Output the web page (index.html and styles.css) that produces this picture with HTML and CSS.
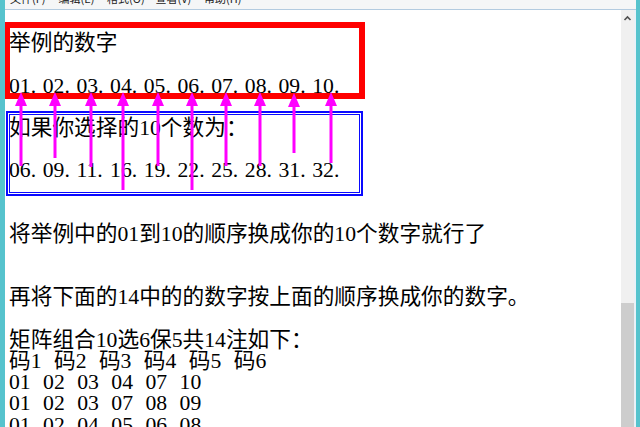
FILE: index.html
```html
<!DOCTYPE html>
<html lang="zh">
<head>
<meta charset="utf-8">
<title>记事本</title>
<link rel="stylesheet" href="styles.css">
</head>
<body>
<div class="window">
  <div class="frame-l"></div>
  <div class="app">
    <div class="menubar">
      <span class="mi">文件(F)</span><span class="mi">编辑(E)</span><span class="mi">格式(O)</span><span class="mi">查看(V)</span><span class="mi">帮助(H)</span>
    </div>
    <div class="client">
      <div class="editor">
        <div class="ln"></div>
        <div class="ln">举例的数字</div>
        <div class="ln"></div>
        <div class="ln nums"><span>01.</span><span>02.</span><span>03.</span><span>04.</span><span>05.</span><span>06.</span><span>07.</span><span>08.</span><span>09.</span><span>10.</span></div>
        <div class="ln"></div>
        <div class="ln">如果你选择的10个数为：</div>
        <div class="ln"></div>
        <div class="ln nums"><span>06.</span><span>09.</span><span>11.</span><span>16.</span><span>19.</span><span>22.</span><span>25.</span><span>28.</span><span>31.</span><span>32.</span></div>
        <div class="ln"></div>
        <div class="ln"></div>
        <div class="ln">将举例中的01到10的顺序换成你的10个数字就行了</div>
        <div class="ln"></div>
        <div class="ln"></div>
        <div class="ln">再将下面的14中的的数字按上面的顺序换成你的数字。</div>
        <div class="ln"></div>
        <div class="ln">矩阵组合10选6保5共14注如下：</div>
        <div class="ln sp">码1 码2 码3 码4 码5 码6</div>
        <div class="ln sp">01 02 03 04 07 10</div>
        <div class="ln sp">01 02 03 07 08 09</div>
        <div class="ln sp">01 02 04 05 06 08</div>
      </div>
      <div class="vscroll">
        <div class="up"><svg width="13" height="16" viewBox="0 0 13 16"><polyline points="3.5,10 6.5,7 9.5,10" fill="none" stroke="#505050" stroke-width="1.6"/></svg></div>
        <div class="track"></div>
        <div class="thumb"></div>
      </div>
      <div class="gap"></div>
    </div>
  </div>
  <div class="frame-r"></div>

  <div class="mark-red"></div>
  <div class="mark-blue"><div class="mark-blue-in"></div></div>
  <svg class="arrows" width="640" height="427" viewBox="0 0 640 427">
    <g stroke="#ff00ff" stroke-width="3" fill="none">
      <line x1="21" y1="104" x2="21" y2="166"/>
      <line x1="55" y1="104" x2="55" y2="158"/>
      <line x1="91" y1="104" x2="91" y2="167"/>
      <line x1="123" y1="104" x2="123" y2="190"/>
      <line x1="158" y1="104" x2="158" y2="166"/>
      <line x1="192" y1="104" x2="192" y2="190"/>
      <line x1="226" y1="104" x2="226" y2="166"/>
      <line x1="260" y1="104" x2="260" y2="166"/>
      <line x1="294" y1="104" x2="294" y2="153"/>
      <line x1="331" y1="104" x2="331" y2="163"/>
    </g>
    <g fill="#ff00ff">
      <polygon points="21,92 15,106 27,106"/>
      <polygon points="55,92 49,106 61,106"/>
      <polygon points="91,92 85,106 97,106"/>
      <polygon points="123,92 117,106 129,106"/>
      <polygon points="158,92 152,106 164,106"/>
      <polygon points="192,92 186,106 198,106"/>
      <polygon points="226,92 220,106 232,106"/>
      <polygon points="260,92 254,106 266,106"/>
      <polygon points="294,93 288,107 300,107"/>
      <polygon points="331,92 325,106 337,106"/>
    </g>
  </svg>
</div>
</body>
</html>
```

FILE: styles.css
```css
html, body {
  margin: 0;
  padding: 0;
  overflow: hidden;
  background: #ffffff;
}

.window {
  position: relative;
  width: 640px;
  height: 427px;
  display: flex;
  overflow: hidden;
}

.frame-l {
  width: 5px;
  background: #56c3cd;
  flex: none;
}

.frame-r {
  width: 4px;
  background: #56c3cd;
  flex: none;
}

.app {
  flex: 1;
  display: flex;
  flex-direction: column;
  min-width: 0;
}

.menubar {
  height: 9px;
  flex: none;
  background: #f5f6f7;
  border-bottom: 1px solid #b3cbe0;
  overflow: hidden;
  display: flex;
  padding-left: 5px;
}

.mi {
  display: block;
  width: 48.5px;
  flex: none;
  margin-top: -8px;
  font-family: "Noto Sans CJK SC", "Noto Sans", sans-serif;
  font-size: 11px;
  line-height: 12px;
  color: #222222;
  white-space: nowrap;
}

.client {
  flex: 1;
  display: flex;
  min-height: 0;
}

.editor {
  flex: 1;
  min-width: 0;
  background: #ffffff;
  padding: 2px 0 0 4px;
  overflow: hidden;
  font-family: "Liberation Serif", "Noto Sans CJK SC", serif;
  font-size: 21.7px;
  line-height: 21.2px;
  color: #000000;
}

.ln {
  height: 21.2px;
  white-space: pre;
}

.nums span {
  display: inline-block;
  width: 33.7px;
}

.sp {
  word-spacing: 7px;
}

.vscroll {
  width: 13px;
  flex: none;
  display: flex;
  flex-direction: column;
  background: #f0f0f0;
}

.up {
  height: 16px;
  flex: none;
}

.up svg {
  display: block;
}

.track {
  height: 277px;
  flex: none;
}

.thumb {
  flex: 1;
  background: #cdcdcd;
}

.gap {
  width: 2px;
  flex: none;
  background: #e9f1f7;
}

.mark-red {
  position: absolute;
  left: 5px;
  top: 22px;
  width: 360px;
  height: 77px;
  box-sizing: border-box;
  border: 6px solid #ff0000;
  border-left-width: 5px;
}

.mark-blue {
  position: absolute;
  left: 6px;
  top: 111px;
  width: 357px;
  height: 85px;
  box-sizing: border-box;
  border: 2px solid #0a0aff;
  padding: 1px;
}

.mark-blue-in {
  width: 100%;
  height: 100%;
  box-sizing: border-box;
  border: 1px solid #0a0aff;
}

.arrows {
  position: absolute;
  left: 0;
  top: 0;
  pointer-events: none;
}
```
